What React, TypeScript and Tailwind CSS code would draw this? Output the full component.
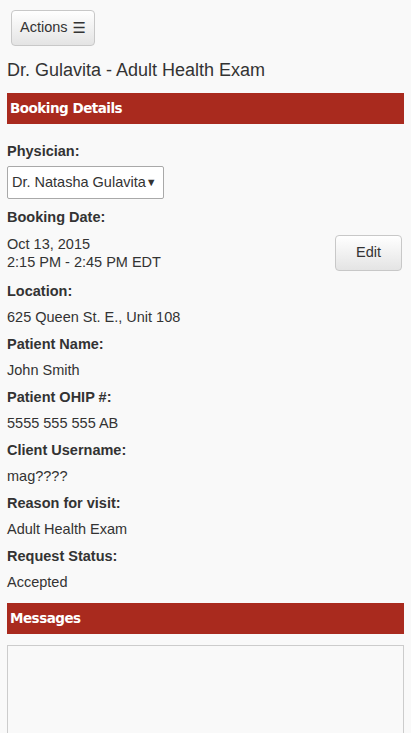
import React from "react";

const fields: Array<{ label: string; value: string }> = [
  { label: "Location:", value: "625 Queen St. E., Unit 108" },
  { label: "Patient Name:", value: "John Smith" },
  { label: "Patient OHIP #:", value: "5555 555 555 AB" },
  { label: "Client Username:", value: "mag????" },
  { label: "Reason for visit:", value: "Adult Health Exam" },
  { label: "Request Status:", value: "Accepted" },
];

function SectionBar({ title }: { title: string }) {
  return (
    <div className="h-[31px] bg-[#a92a1e] px-[3px] flex items-center">
      <span className="text-white font-bold text-[13.5px] font-['DejaVu_Sans',sans-serif] tracking-[-0.5px]">
        {title}
      </span>
    </div>
  );
}

export default function App() {
  return (
    <div className="min-h-[733px] bg-[#f9f9f9] px-[7px] pt-[10px] text-[#333] font-['Liberation_Sans',Arial,sans-serif] text-[14.5px] overflow-hidden">
      <button
        type="button"
        className="ml-[4px] h-[36px] w-[84px] rounded-[4px] border border-[#c8c8c8] bg-gradient-to-b from-white to-[#e4e4e4] text-[14.5px] text-[#333] flex items-center justify-center gap-[5px]"
      >
        <span>Actions</span>
        <span className="font-['DejaVu_Sans',sans-serif] text-[15px] leading-none">☰</span>
      </button>

      <h1 className="mt-[13px] text-[18px] leading-[22px] font-normal">
        Dr. Gulavita - Adult Health Exam
      </h1>

      <div className="mt-[12px]">
        <SectionBar title="Booking Details" />
      </div>

      <div className="mt-[17px] font-bold leading-5">Physician:</div>
      <div className="mt-[5px] h-[33px] w-[157px] border border-[#a9a9a9] rounded-[2px] bg-white flex items-center pl-[4px] pr-[2px]">
        <span className="whitespace-nowrap">Dr. Natasha Gulavita</span>
        <span className="text-[11px] leading-none">▼</span>
      </div>

      <div className="mt-[8px] font-bold leading-5">Booking Date:</div>
      <div className="mt-[8px] flex items-center justify-between pr-[2px]">
        <div className="leading-[18px]">
          <div>Oct 13, 2015</div>
          <div>2:15 PM - 2:45 PM EDT</div>
        </div>
        <button
          type="button"
          className="h-[36px] w-[67px] rounded-[4px] border border-[#c8c8c8] bg-gradient-to-b from-white to-[#e4e4e4] text-[14.5px] text-[#333]"
        >
          Edit
        </button>
      </div>

      <div className="mt-[10px]">
        {fields.map((f) => (
          <div key={f.label} className="mb-[7px]">
            <div className="font-bold leading-5">{f.label}</div>
            <div className="mt-[6px] leading-5">{f.value}</div>
          </div>
        ))}
      </div>

      <div className="mt-[11px]">
        <SectionBar title="Messages" />
      </div>

      <textarea className="mt-[11px] block w-full h-[200px] border border-[#ccc] bg-[#f9f9f9] resize-none" />
    </div>
  );
}
